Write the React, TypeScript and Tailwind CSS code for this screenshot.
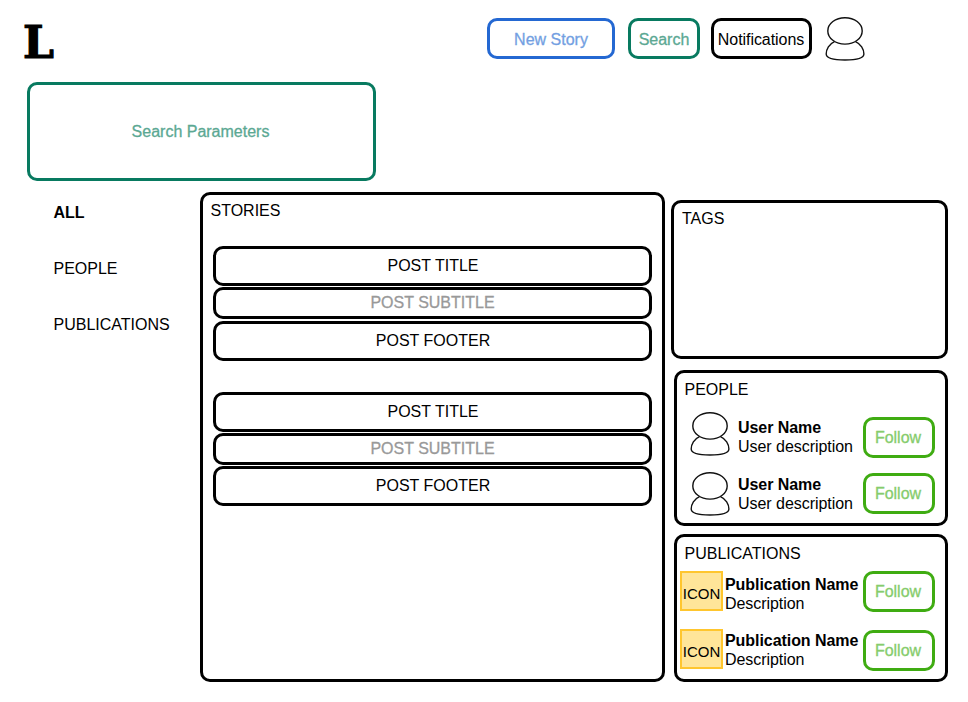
import type { ReactNode } from "react";

function PersonIcon({ className = "" }: { className?: string }) {
  return (
    <svg className={`shrink-0 ${className}`} width="40" height="46" viewBox="0 0 40 46" fill="none" stroke="#111" strokeWidth="1.4">
      <path d="M9.500 25.700C4.200 28 1.200 33.400 1.200 38C1.200 42 8.500 44 20 44C31.500 44 38.900 42 38.900 38C38.900 33.400 35.800 28 30.500 25.700" />
      <ellipse cx="20" cy="14.900" rx="17.200" ry="13.200" fill="#fff" />
    </svg>
  );
}

function Box({ className = "", children }: { className?: string; children?: ReactNode }) {
  return <div className={`shrink-0 rounded-[10px] border-[3px] ${className}`}>{children}</div>;
}

function Follow() {
  return (
    <button className="h-[41px] w-[72px] shrink-0 rounded-[10px] border-[3px] border-[#3fac12] pr-[2px] pt-px text-center text-[#86cc6c] [-webkit-text-stroke:0.3px_#86cc6c]">
      Follow
    </button>
  );
}

function Post() {
  return (
    <article className="flex flex-col gap-[1.2px] text-center">
      <Box className="flex h-10 items-center justify-center border-black pl-px">POST TITLE</Box>
      <Box className="flex h-8 items-center justify-center border-black text-[#999] [-webkit-text-stroke:0.3px_#999]">POST SUBTITLE</Box>
      <Box className="flex h-10 items-center justify-center border-black pl-px">POST FOOTER</Box>
    </article>
  );
}

function User({ textClass }: { textClass: string }) {
  return (
    <div className="flex h-[46px] items-start pl-[13px]">
      <PersonIcon />
      <div className={`ml-[8px] w-[125px] leading-[19px] ${textClass}`}>
        <div className="font-bold tracking-[-0.06px]">User Name</div>
        <div className="tracking-[-0.04px]">User description</div>
      </div>
    </div>
  );
}

function Publication({ textClass }: { textClass: string }) {
  return (
    <div className="flex h-10 items-start">
      <div className="flex h-10 w-[43px] shrink-0 items-center justify-center border-2 border-[#ffc62e] bg-[#ffe599] pt-[6px] text-[15px]">ICON</div>
      <div className={`ml-[2px] w-[138px] whitespace-nowrap leading-[19px] ${textClass}`}>
        <div className="font-bold tracking-[-0.06px]">Publication Name</div>
        <div className="tracking-[-0.06px]">Description</div>
      </div>
    </div>
  );
}

export default function App() {
  return (
    <div className="h-[702px] w-[968px] overflow-hidden bg-white font-['Liberation_Sans',Arial,sans-serif] text-[16px] leading-[18px] text-black">
      <header className="flex h-[82px] items-start pl-[23px]">
        <div className="w-[464px] pt-[17px] font-['DejaVu_Serif',serif] text-[44px] font-bold leading-[52px] [-webkit-text-stroke:1.2px_black]">L</div>
        <button className="mt-[18px] h-[41px] w-[128px] rounded-[10px] border-[3px] border-[#2468d2] pt-[2px] text-[#739fe2] [-webkit-text-stroke:0.3px_#739fe2]">New Story</button>
        <button className="ml-[13px] mt-[18px] h-[41px] w-[72px] rounded-[10px] border-[3px] border-[#087a60] pt-[2px] text-[#5ba893] [-webkit-text-stroke:0.3px_#5ba893]">Search</button>
        <button className="ml-[11px] mt-[18px] h-[41px] w-[101px] whitespace-nowrap rounded-[10px] border-[3px] border-black pr-px pt-[2px] tracking-[-0.06px]">Notifications</button>
        <PersonIcon className="ml-[13px] mt-[16px]" />
      </header>
      <Box className="ml-[27px] flex h-[99px] w-[349px] items-center justify-center border-[#087a60] pr-[2px] text-[#5ba893] [-webkit-text-stroke:0.3px_#5ba893]">
        Search Parameters
      </Box>
      <main className="flex items-start pt-[11px]">
        <nav className="flex w-[200px] flex-col gap-[38px] pl-[53.5px] pt-[12px]">
          <span className="font-bold">ALL</span>
          <span>PEOPLE</span>
          <span>PUBLICATIONS</span>
        </nav>
        <Box className="h-[490px] w-[465px] border-black px-[10px] pt-[7px]">
          <h2 className="-ml-[2.5px]">STORIES</h2>
          <div className="mt-[26.3px] flex flex-col gap-[31px]">
            <Post />
            <Post />
          </div>
        </Box>
        <aside className="ml-[6px] flex w-[277px] flex-col items-end pt-[8px]">
          <Box className="h-[159px] w-[277px] border-black pl-[8px] pt-[7px]">TAGS</Box>
          <Box className="mt-[11px] flex h-[156px] w-[274px] border-black">
            <div className="w-[186px] pt-[8px]">
              <h2 className="pl-[7.5px]">PEOPLE</h2>
              <div className="mt-[12px] flex flex-col gap-[14px]">
                <User textClass="pt-[7px]" />
                <User textClass="pt-[4px]" />
              </div>
            </div>
            <div className="flex flex-col gap-[15px] pt-[44px]">
              <Follow />
              <Follow />
            </div>
          </Box>
          <Box className="mt-[8px] flex h-[148px] w-[274px] border-black">
            <div className="w-[186px] pl-[3px] pt-[8px]">
              <h2 className="mb-[8px] pl-[4.5px]">PUBLICATIONS</h2>
              <div className="flex flex-col gap-[18px]">
                <Publication textClass="pt-[4px]" />
                <Publication textClass="pt-[2px]" />
              </div>
            </div>
            <div className="flex flex-col gap-[18px] pt-[34px]">
              <Follow />
              <Follow />
            </div>
          </Box>
        </aside>
      </main>
    </div>
  );
}
